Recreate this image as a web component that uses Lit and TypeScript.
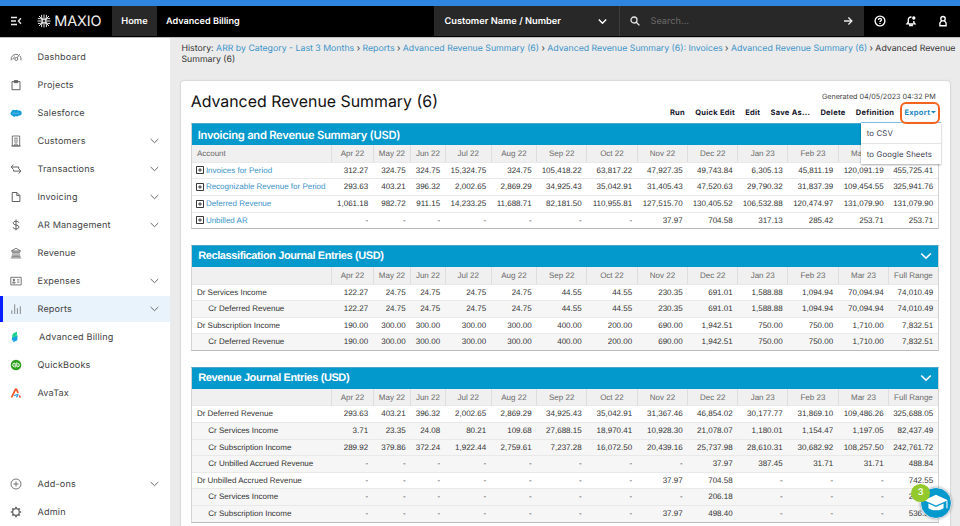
import { LitElement, html, svg, css, nothing, type TemplateResult } from "lit";
import { customElement, property } from "lit/decorators.js";
import { classMap } from "lit/directives/class-map.js";

const MONTHS = ["Apr 22", "May 22", "Jun 22", "Jul 22", "Aug 22", "Sep 22", "Oct 22", "Nov 22", "Dec 22", "Jan 23", "Feb 23", "Mar 23", "Full Range"];

interface Row { label: string; kind: "link" | "dr" | "cr"; values: string[]; }
const row = (kind: Row["kind"], label: string, values: string): Row => ({ kind, label, values: values.split(" ") });

const SUMMARY: Row[] = [
  row("link", "Invoices for Period", "312.27 324.75 324.75 15,324.75 324.75 105,418.22 63,817.22 47,927.35 49,743.84 6,305.13 45,811.19 120,091.19 455,725.41"),
  row("link", "Recognizable Revenue for Period", "293.63 403.21 396.32 2,002.65 2,869.29 34,925.43 35,042.91 31,405.43 47,520.63 29,790.32 31,837.39 109,454.55 325,941.76"),
  row("link", "Deferred Revenue", "1,061.18 982.72 911.15 14,233.25 11,688.71 82,181.50 110,955.81 127,515.70 130,405.52 106,532.88 120,474.97 131,079.90 131,079.90"),
  row("link", "Unbilled AR", "- - - - - - - 37.97 704.58 317.13 285.42 253.71 253.71"),
];
const RECLASS: Row[] = [
  row("dr", "Dr Services Income", "122.27 24.75 24.75 24.75 24.75 44.55 44.55 230.35 691.01 1,588.88 1,094.94 70,094.94 74,010.49"),
  row("cr", "Cr Deferred Revenue", "122.27 24.75 24.75 24.75 24.75 44.55 44.55 230.35 691.01 1,588.88 1,094.94 70,094.94 74,010.49"),
  row("dr", "Dr Subscription Income", "190.00 300.00 300.00 300.00 300.00 400.00 200.00 690.00 1,942.51 750.00 750.00 1,710.00 7,832.51"),
  row("cr", "Cr Deferred Revenue", "190.00 300.00 300.00 300.00 300.00 400.00 200.00 690.00 1,942.51 750.00 750.00 1,710.00 7,832.51"),
];
const REVENUE: Row[] = [
  row("dr", "Dr Deferred Revenue", "293.63 403.21 396.32 2,002.65 2,869.29 34,925.43 35,042.91 31,367.46 46,854.02 30,177.77 31,869.10 109,486.26 325,688.05"),
  row("cr", "Cr Services Income", "3.71 23.35 24.08 80.21 109.68 27,688.15 18,970.41 10,928.30 21,078.07 1,180.01 1,154.47 1,197.05 82,437.49"),
  row("cr", "Cr Subscription Income", "289.92 379.86 372.24 1,922.44 2,759.61 7,237.28 16,072.50 20,439.16 25,737.98 28,610.31 30,682.92 108,257.50 242,761.72"),
  row("cr", "Cr Unbilled Accrued Revenue", "- - - - - - - - 37.97 387.45 31.71 31.71 488.84"),
  row("dr", "Dr Unbilled Accrued Revenue", "- - - - - - - 37.97 704.58 - - - 742.55"),
  row("cr", "Cr Services Income", "- - - - - - - - 206.18 - - - 206.18"),
  row("cr", "Cr Subscription Income", "- - - - - - - 37.97 498.40 - - - 536.37"),
];

const ICONS: Record<string, TemplateResult> = {
  dashboard: svg`<path d="M1.2 9.4A5 5 0 0 1 8 3.7M9.9 4.800A5 5 0 0 1 10.900 9.400M2.800 8.400a3.600 3.600 0 0 1 2-2.600"/><circle cx="6.300" cy="8" r="1.500"/><path d="M7.200 6.900 9.600 3.200"/>`,
  projects: svg`<path d="M2 2.7h8v8H2z" stroke-width="1"/><path d="M4.3 1.5h3.4v2.2H4.3z" fill="#666"/>`,
  salesforce: svg`<path stroke="none" fill="#139cd8" d="M5 3.2a2.2 2.2 0 0 1 3 .4 2.7 2.7 0 0 1 3.7 2.4A2.3 2.3 0 0 1 8.6 8.4a2 2 0 0 1-2.8.7 2.1 2.1 0 0 1-3.4-.7A2 2 0 0 1 .5 6.4c0-.8.4-1.4.9-1.7A2.3 2.3 0 0 1 5 3.2z"/><path stroke="#8fd0ee" stroke-width=".6" d="M2.3 6.2h7.2"/>`,
  customers: svg`<path d="M2.3 1h7.4v10H2.3zM4.2 3.2h3.6M4.2 5.1h3.6M4.2 7h3.6M4.8 11V9h2.4v2M1.3 11h9.4"/>`,
  transactions: svg`<path stroke-width="1" d="M3.4 1.6 1.2 4l2.2 2.4M1.4 4h7.3v1.7M8.7 5.7l2.2 2.4-2.2 2.4M10.7 8.1H3.5V6.8"/>`,
  invoicing: svg`<path stroke-width="1" d="M2.2 1.5h4.7l3 3v6H2.2zM6.8 1.6v3h3"/>`,
  ar: svg`<path stroke-width="1" d="M8.9 3.7C8.5 2.7 7.5 2.2 6 2.2c-1.7 0-2.8.7-2.8 1.9C3.2 6.7 9 5.3 9 8c0 1.2-1.2 1.9-3 1.9S3.2 9.2 3 8.1M6 .6v10.8"/>`,
  revenue: svg`<path d="M1.3 4 6 1.3 10.7 4zM2 5.1h8M3 5.2v4M5 5.2v4M7 5.2v4M9 5.2v4M1.6 9.3h8.8M.9 10.9h10.2"/>`,
  expenses: svg`<path d="M.8 2.3h10.4v7.6H.8z"/><circle cx="3.9" cy="5" r=".8" fill="#666"/><path d="M2.5 8c.2-1.5 2.6-1.5 2.8 0zM7 4.9h2.5M7 7.1h2.5"/>`,
  reports: svg`<path d="M1.8 7.3V11M4.7 1.3V11M7.4 5.2V11M10.3 3.3V11" stroke="#777"/>`,
  billing: svg`<path stroke="none" fill="#1fd18b" d="M3.300 2.300 7 .8v3L4.900 4.800l2.600-.7v2.100L2.200 7V4.200z"/><path stroke="none" fill="#149fe6" d="M1.900 6.800l5.500-1.500v4L3.300 11.300V9.300l-1.400.2z"/>`,
  quickbooks: svg`<circle cx="6" cy="6" r="5.3" fill="#2ca01c" stroke="none"/><path stroke="#fff" stroke-width="1" d="M5.2 8.6V4.3H4.3a1.65 1.65 0 0 0 0 3.3M6.8 3.4v4.3h.9a1.65 1.65 0 0 0 0-3.3"/>`,
  avatax: svg`<path stroke="#f4511e" stroke-width="1.7" d="M1.5 10.5 5.5 2.3h1L8.1 6"/><path stroke="#f4511e" stroke-width="1.6" d="M9.3 8.5l1 2.1"/><path stroke="#3f9fdc" stroke-width="1.3" d="M4 8.8c1.4-.9 2.7-1.3 4.5-1.4M6.3 10.3 8 8.3"/>`,
  addons: svg`<circle cx="6" cy="6" r="5"/><path d="M6 3.4v5.2M3.4 6h5.2"/>`,
  admin: svg`<circle cx="6" cy="6" r="3.3" stroke-width="1.2"/><path stroke-width="1.7" d="M6 .8v1.5M6 9.7v1.5M.8 6h1.5M9.7 6h1.5M2.3 2.3l1.1 1.1M8.6 8.6l1.1 1.1M9.7 2.3 8.6 3.4M3.4 8.6 2.3 9.7"/>`,
};

@customElement("nav-item")
class NavItem extends LitElement {
  @property() icon = "";
  @property() label = "";
  @property({ type: Boolean }) expandable = false;
  @property({ type: Boolean, reflect: true }) active = false;
  @property({ type: Boolean }) indented = false;
  static styles = css`
    :host { display: flex; align-items: center; height: 26.6px; margin: 0.7px 0; padding: 0 11.5px 0 10px; box-sizing: border-box; border-left: 0 solid #0a1eff; }
    :host([active]) { background: #e9f3fc; border-left-width: 3px; padding-left: 7px; }
    .icon { width: 12px; height: 12px; fill: none; stroke: #606060; stroke-width: .85; flex: none; }
    .label { flex: 1; margin-left: 15.5px; padding-top: 1.4px; font-size: 9.1px; letter-spacing: .17px; color: #3f3f3f; white-space: nowrap; }
    .indented { margin-left: 17px; }
    .chev { width: 9px; height: 6px; fill: none; stroke: #666; stroke-width: 1; }
  `;
  render() {
    return html`<svg class="icon" viewBox="0 0 12 12">${ICONS[this.icon]}</svg>
      <span class=${classMap({ label: true, indented: this.indented })}>${this.label}</span>
      ${this.expandable ? html`<svg class="chev" viewBox="0 0 9 6"><path d="M.7 1 4.5 4.7 8.3 1" /></svg>` : nothing}`;
  }
}

@customElement("report-table")
class ReportTable extends LitElement {
  @property() heading = "";
  @property() corner = "";
  @property({ type: Boolean }) primary = false;
  @property({ attribute: false }) rows: Row[] = [];
  static styles = css`
    :host { display: block; font-family: "Liberation Sans", Arial, sans-serif; font-size: 8px; color: #333; box-sizing: border-box; border: 1px solid #d4d4d4; border-top-color: #4aa6cb; border-bottom-color: #bbb; }
    .title { display: flex; align-items: center; justify-content: space-between; height: 21px; padding: 0 6px 0 6.5px; background: #0499cd; color: #fff; font-weight: 700; font-size: 11px; letter-spacing: -.4px; white-space: nowrap; }
    .primary { font-family: Inter, sans-serif; font-size: 11.2px; letter-spacing: -.25px; font-weight: 600; padding-left: 6px; }
    .chev { width: 12px; height: 8px; fill: none; stroke: #fff; stroke-width: 1.5; }
    .line { display: grid; grid-template-columns: 139.5px 41.5px 37.5px 34.5px 46px 45.5px 50px 50.5px 50.5px 50px 50px 50.5px 50.5px 1fr; height: 16.64px; line-height: 16.2px; box-sizing: border-box; border-top: .5px solid #e9e9e9; white-space: nowrap; }
    .head { background: #f0f0f0; color: #6b6b6b; line-height: 17.2px; border-top: 0; }
    .head .cell { text-align: center; padding: 0; border-left: 1px solid #dedede; }
    .cr { background: #f6f6f6; }
    .name { padding-left: 5.2px; display: flex; align-items: center; gap: 2px; }
    .cr .name { padding-left: 16.6px; }
    .link .name { color: #3b93c8; padding-left: 4.5px; gap: 1.7px; }
    .cell { text-align: right; padding-right: 4.5px; }
    .plus { width: 8px; height: 8px; margin-top: -1px; fill: none; stroke: #222; stroke-width: .9; }
  `;
  render() {
    return html`
      <div class=${classMap({ title: true, primary: this.primary })}><span>${this.heading}</span><svg class="chev" viewBox="0 0 12 8"><path d="M1.2 1.5 6 6.1l4.8-4.6" /></svg></div>
      <div class="line head"><span class="name">${this.corner}</span>${MONTHS.map((m) => html`<span class="cell">${m}</span>`)}</div>
      ${this.rows.map((r) => html`<div class="line ${r.kind}">
        <span class="name">${r.kind === "link" ? html`<svg class="plus" viewBox="0 0 8 8"><path d="M.5.5h7v7h-7zM4 2.2v3.6M2.2 4h3.6" /></svg>` : nothing}${r.label}</span>
        ${r.values.map((v) => html`<span class="cell">${v}</span>`)}
      </div>`)}`;
  }
}

@customElement("app-root")
class AppRoot extends LitElement {
  static styles = css`
    :host { display: flex; flex-direction: column; position: relative; width: 960px; height: 526px; overflow: hidden; background: #ebebeb; font-family: Inter, "Liberation Sans", sans-serif; text-rendering: geometricPrecision; }
    svg { display: block; flex: none; }
    .accent { height: 5.5px; background: #2f86e0; flex: none; }
    .top { display: flex; height: 31.5px; background: #000; color: #fff; flex: none; align-items: stretch; font-size: 9.25px; font-weight: 600; border-bottom: 1px solid #bdbdbd; white-space: nowrap; }
    .top > * { display: flex; align-items: center; height: 30.5px; box-sizing: border-box; padding-top: 1px; }
    .brand { width: 112px; padding-left: 10px; }
    .burger { width: 12px; height: 12px; fill: none; stroke: #eee; stroke-width: 1.3; }
    .star { width: 14px; height: 14px; margin-left: 14.5px; fill: none; stroke: #fff; stroke-width: .9; }
    .word { margin-left: 3.8px; font-size: 14.4px; font-weight: 400; letter-spacing: -.1px; color: #f2f2f2; }
    .tab { width: 45px; justify-content: center; background: #282828; }
    .tab2 { flex: 1; padding-left: 9px; font-size: 9.1px; }
    .picker { width: 185px; background: #282828; justify-content: space-between; padding-left: 10.5px; padding-right: 12px; }
    .picker svg { width: 9px; height: 7px; fill: none; stroke: #fff; stroke-width: 1.4; }
    .search { width: 244.5px; background: #282828; border-left: 1px solid #3c3c3c; padding-left: 10px; padding-right: 10.5px; }
    .search .ph { flex: 1; margin-left: 10.5px; font-weight: 400; font-size: 9.2px; color: #686868; }
    .search svg { width: 10px; height: 10px; fill: none; stroke: #e8e8e8; stroke-width: 1.3; }
    .tools { width: 96.5px; padding-left: 10px; gap: 19.9px; }
    .tools svg { width: 12px; height: 12px; fill: none; stroke: #fff; stroke-width: 1.35; }
    .body { flex: 1; display: flex; min-height: 0; }
    .side { width: 170px; background: #fff; padding-top: 5.3px; display: flex; flex-direction: column; box-sizing: border-box; flex: none; }
    .gap { height: 63px; flex: none; }
    .main { flex: 1; min-width: 0; padding: 6px 0 0 11px; display: flex; flex-direction: column; }
    .crumbs { font-size: 8.76px; line-height: 10.6px; color: #333; white-space: nowrap; padding-left: .5px; height: 21px; flex: none; }
    .crumbs a { color: #3b93c8; }
    .card { width: 769px; height: 480px; flex: none; margin-top: 16px; background: #fff; border-radius: 3px; box-shadow: 0 0 2px rgba(0,0,0,.28); box-sizing: border-box; padding: 10.1px 10.5px 0 9.7px; }
    .top-row { display: flex; justify-content: space-between; height: 32px; }
    h1 { margin: 0; font-weight: 400; font-size: 15.9px; line-height: 21px; color: #111; white-space: nowrap; }
    .right { display: flex; flex-direction: column; align-items: flex-end; padding-right: 3.8px; }
    .gen { font-size: 7.2px; line-height: 12px; color: #444; }
    .actions { display: flex; gap: 10.2px; margin-top: 3.5px; font-size: 7.5px; letter-spacing: .27px; font-weight: 700; line-height: 12px; color: #14142b; }
    .export { position: relative; color: #1c87c0; display: flex; align-items: center; gap: .5px; }
    .caret { width: 5px; height: 3px; fill: #1c87c0; }
    .ring { position: absolute; left: -4.8px; top: -5px; width: 40px; height: 22px; box-sizing: border-box; border: 2px solid #f4641f; border-radius: 6px; z-index: 3; }
    .menu { position: absolute; z-index: 2; right: -5.5px; top: 15.5px; width: 80px; background: #fff; border-top: 1px solid #7fbfe6; box-shadow: 0 1px 2px rgba(0,0,0,.35); box-sizing: border-box; font-weight: 400; font-size: 7.75px; letter-spacing: .16px; color: #3c3c50; white-space: nowrap; }
    .menu div { height: 20px; line-height: 20px; padding-left: 5.5px; }
    .menu div + div { border-top: 1px solid #e4e4e4; }
    .tables { display: flex; flex-direction: column; gap: 15.7px; width: 748px; }
    .help { position: absolute; left: 911px; top: 484px; width: 42px; height: 36px; }
    .disc { position: absolute; right: 1px; bottom: 1px; width: 32px; height: 32px; border-radius: 50%; background: #0499cd; border: 1px solid #e6e6e6; box-sizing: border-box; box-shadow: 0 0 3px rgba(0,0,0,.3); display: grid; place-items: center; }
    .disc svg { width: 26px; height: 21.7px; fill: #fff; }
    .badge { position: absolute; left: 0; top: 0; width: 19px; height: 17.5px; border-radius: 50%; background: #93c92c; color: #fff; font-weight: 600; font-size: 9px; line-height: 17.5px; text-align: center; }
  `;

  private nav(icon: string, label: string, expandable = false, active = false) {
    return html`<nav-item icon=${icon} label=${label} ?expandable=${expandable} ?active=${active} ?indented=${icon === "billing"}></nav-item>`;
  }

  render() {
    return html`
      <div class="accent"></div>
      <header class="top">
        <div class="brand">
          <svg class="burger" viewBox="0 0 12 12"><path d="M1 2.5h6M1 6h5M1 9.5h6M11 3.2 8.4 6 11 8.8" /></svg>
          <svg class="star" viewBox="0 0 14 14"><path d="M7 6V.5M7 8v5.5M6 7H.5M8 7h5.5M6.2 6.2 2 2M7.8 6.2 12 2M6.2 7.8 2 12M7.8 7.8 12 12M4.6.9v2.7L7 5.6l2.4-2V.9M4.6 13.1v-2.7l2.4-2 2.4 2v2.7M.9 4.6h2.7l2 2.4-2 2.4H.9M13.1 4.6h-2.7l-2 2.4 2 2.4h2.7" /></svg>
          <span class="word">MAXIO</span>
        </div>
        <div class="tab">Home</div>
        <div class="tab2">Advanced Billing</div>
        <div class="picker"><span>Customer Name / Number</span><svg viewBox="0 0 9 7"><path d="M.8 1.5 4.5 5.2l3.7-3.7" /></svg></div>
        <div class="search">
          <svg viewBox="0 0 10 10"><circle cx="4" cy="4" r="3" /><path d="M6.3 6.3 9.4 9.4" /></svg>
          <span class="ph">Search...</span>
          <svg viewBox="0 0 10 10"><path d="M1 5h7.8M5.4 1.5 8.9 5 5.4 8.5" /></svg>
        </div>
        <div class="tools">
          <svg viewBox="0 0 12 12"><circle cx="6" cy="6" r="4.9" /><path d="M4.5 4.9c0-2 3-2 3-.1 0 1-1.5 1.1-1.5 2.2M6 8v1.1" /></svg>
          <svg viewBox="0 0 12 12"><path d="M6.5 2C4.3 1.9 3.3 3.2 3.3 5v2.2L2 8.9h8L8.8 7.3V6M4.8 9.2v1.3h2.4V9.2" /><circle cx="8.8" cy="3" r="1" fill="#fff" /></svg>
          <svg viewBox="0 0 12 12"><circle cx="6" cy="3.7" r="2.2" /><path d="M4.6 5.7 2.9 7.9v2.8h6.2V7.9L7.4 5.7" /></svg>
        </div>
      </header>
      <div class="body">
        <nav class="side">
          ${this.nav("dashboard", "Dashboard")}
          ${this.nav("projects", "Projects")}
          ${this.nav("salesforce", "Salesforce")}
          ${this.nav("customers", "Customers", true)}
          ${this.nav("transactions", "Transactions", true)}
          ${this.nav("invoicing", "Invoicing", true)}
          ${this.nav("ar", "AR Management", true)}
          ${this.nav("revenue", "Revenue")}
          ${this.nav("expenses", "Expenses", true)}
          ${this.nav("reports", "Reports", true, true)}
          ${this.nav("billing", "Advanced Billing")}
          ${this.nav("quickbooks", "QuickBooks")}
          ${this.nav("avatax", "AvaTax")}
          <div class="gap"></div>
          ${this.nav("addons", "Add-ons", true)}
          ${this.nav("admin", "Admin")}
        </nav>
        <main class="main">
          <div class="crumbs">History: <a>ARR by Category - Last 3 Months</a> › <a>Reports</a> › <a>Advanced Revenue Summary (6)</a> › <a>Advanced Revenue Summary (6): Invoices</a> › <a>Advanced Revenue Summary (6)</a> › Advanced Revenue<br />Summary (6)</div>
          <section class="card">
            <div class="top-row">
              <h1>Advanced Revenue Summary (6)</h1>
              <div class="right">
                <div class="gen">Generated 04/05/2023 04:32 PM</div>
                <div class="actions">
                  <span>Run</span><span>Quick Edit</span><span>Edit</span><span>Save As...</span><span>Delete</span><span>Definition</span>
                  <span class="export">Export<svg class="caret" viewBox="0 0 5 3"><path d="M0 0h5L2.5 2.6z" /></svg>
                    <span class="ring"></span>
                    <div class="menu"><div>to CSV</div><div>to Google Sheets</div></div>
                  </span>
                </div>
              </div>
            </div>
            <div class="tables">
              <report-table heading="Invoicing and Revenue Summary (USD)" corner="Account" primary .rows=${SUMMARY}></report-table>
              <report-table heading="Reclassification Journal Entries (USD)" .rows=${RECLASS}></report-table>
              <report-table heading="Revenue Journal Entries (USD)" .rows=${REVENUE}></report-table>
            </div>
          </section>
        </main>
      </div>
      <div class="help">
        <div class="disc"><svg viewBox="0 0 24 20"><path d="M12 2.5 23 7.5 12 12.5 1 7.5zM5 10.7l7 3.2 7-3.2v4c-2 3-12 3-14 0zM21.6 8.5l1 0v6.5h-1z" /></svg></div>
        <div class="badge">3</div>
      </div>`;
  }
}
